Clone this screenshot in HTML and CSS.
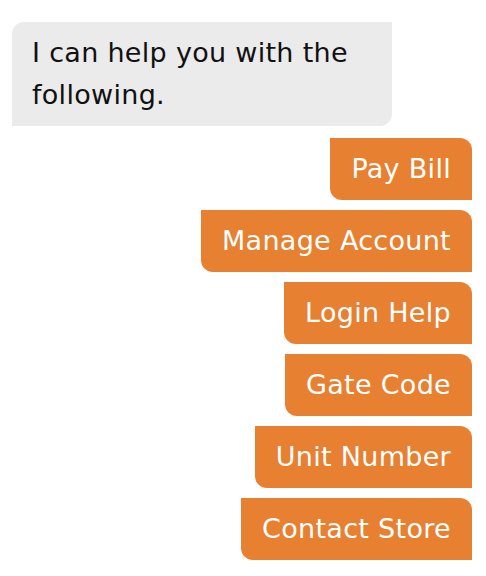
FILE: index.html
```html
<!doctype html>
<html>
<head>
<meta charset="utf-8">
<link rel="stylesheet" href="styles.css">
<title>chat</title>
</head>
<body>
<div class="chat">
    <div class="bubble">I can help you with the following.</div>
    <div class="options">
        <button class="option">Pay Bill</button>
        <button class="option">Manage Account</button>
        <button class="option">Login Help</button>
        <button class="option">Gate Code</button>
        <button class="option">Unit Number</button>
        <button class="option">Contact Store</button>
    </div>
</div>
</body>
</html>
```

FILE: styles.css
```css
body {
    margin: 0;
    background: #fff;
    font-family: "DejaVu Sans", "Noto Sans", sans-serif;
}
.chat {
    padding: 22px 14px 0 12px;
}
.bubble {
    box-sizing: border-box;
    max-width: 380px;
    padding: 10px 20px;
    background: #ebebeb;
    color: #111;
    font-size: 27px;
    line-height: 42px;
    letter-spacing: 0.3px;
    border-radius: 12px 0 12px 0;
}
.options {
    display: flex;
    flex-direction: column;
    align-items: flex-end;
    gap: 10px;
    margin-top: 12px;
}
.option {
    border: 0;
    margin: 0;
    padding: 10px 21px;
    background: #e78031;
    color: #fff;
    font-family: inherit;
    font-size: 27px;
    line-height: 42px;
    letter-spacing: 0.3px;
    border-radius: 0 12px 0 12px;
}
```
